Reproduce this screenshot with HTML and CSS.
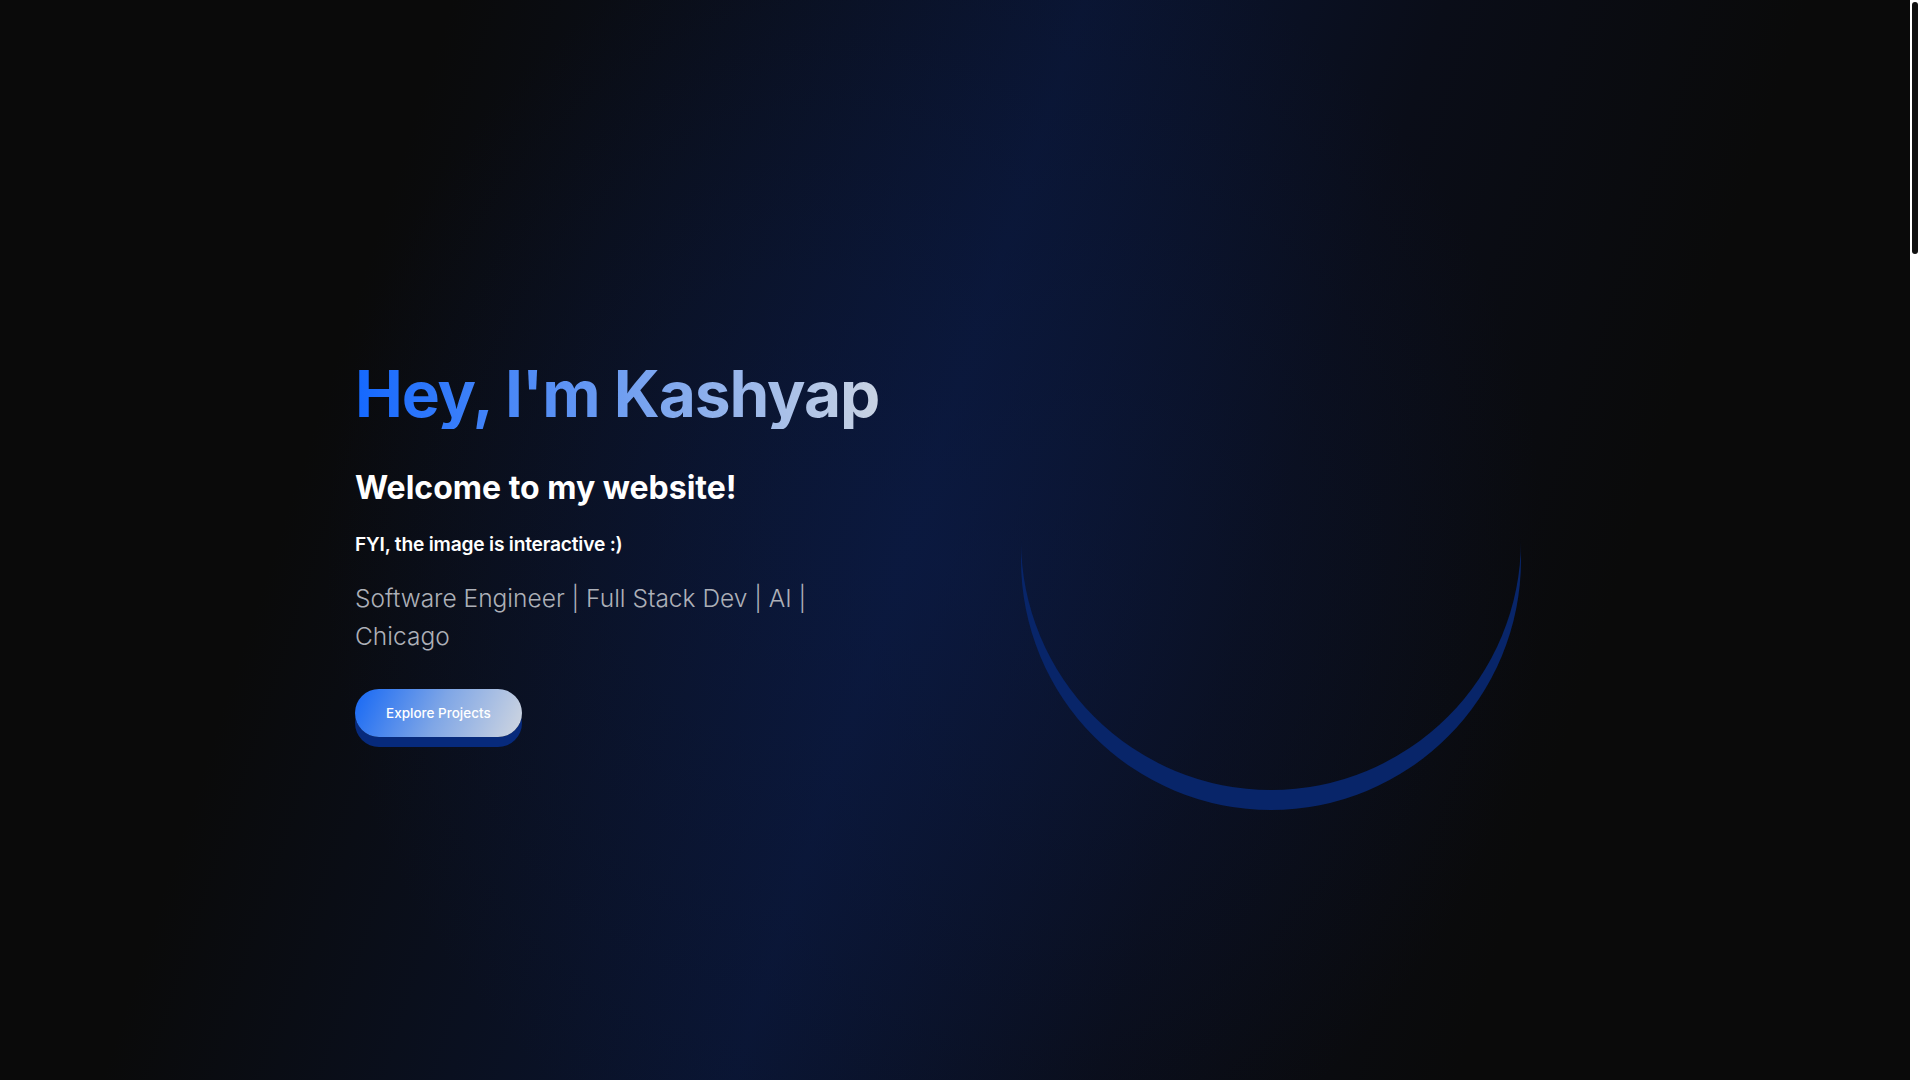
FILE: index.html
```html
<!DOCTYPE html>
<html lang="en">
<head>
  <meta charset="UTF-8" />
  <meta name="viewport" content="width=device-width, initial-scale=1.0" />
  <title>Kashyap</title>
  <link rel="stylesheet" href="styles.css">
</head>
<body>
  <main class="page">
    <section class="hero">
      <div class="hero-inner">
        <div class="hero-text">
          <h1 class="hero-title">Hey, I'm Kashyap</h1>
          <h2 class="hero-welcome">Welcome to my website!</h2>
          <p class="hero-note">FYI, the image is interactive :)</p>
          <p class="hero-roles">Software Engineer | Full Stack Dev | AI | Chicago</p>
          <a class="btn-explore" href="#projects">Explore Projects</a>
        </div>
        <div class="hero-visual">
          <!-- portrait slot, image not loaded yet -->
          <div class="portrait"></div>
        </div>
      </div>
    </section>

    <!-- sections further down the page -->
    <section class="section" id="about"></section>
    <section class="section" id="projects"></section>
    <section class="section" id="contact"></section>
  </main>

  <!-- scrollbar as rendered in the original window -->
  <div class="scrollbar" aria-hidden="true">
    <div class="scrollbar-thumb"></div>
  </div>
</body>
</html>
```

FILE: styles.css
```css
html {
  background: #0a0a0a;
}
body {
  margin: 0;
  font-family: "Inter", "Noto Sans", sans-serif;
  color: #fff;
  background: #0a0a0a;
}

.page {
  margin-right: 10px;
  background: #0a0a0a;
}

.hero {
  min-height: 100vh;
  display: flex;
  align-items: center;
  background:
    radial-gradient(ellipse 32% 62% at 49% 52%, rgba(12,30,80,0.45) 0%, rgba(12,30,80,0) 100%),
    linear-gradient(108deg, #0a0a0a 20%, #0a1532 48%, #0a0d18 64%, #0a0a0a 80%);
}
.hero-inner {
  width: 1200px;
  margin: 0 auto;
  display: grid;
  grid-template-columns: 1fr 1fr;
  gap: 64px;
  align-items: center;
}

.hero-text {
  padding-top: 16px;
}
.hero-title {
  display: inline-block;
  margin: 0 0 40px;
  font-size: 64px;
  line-height: 1.1;
  font-weight: 700;
  letter-spacing: -1.1px;
  white-space: nowrap;
  background: linear-gradient(to right, #1468ff, #c9d3e3);
  -webkit-background-clip: text;
  background-clip: text;
  color: transparent;
}
.hero-welcome {
  margin: 0 0 23px;
  font-size: 32px;
  line-height: 1.2;
  font-weight: 700;
}
.hero-note {
  margin: 0 0 21px;
  font-size: 19.2px;
  line-height: 28px;
  font-weight: 600;
  letter-spacing: -0.2px;
}
.hero-roles {
  max-width: 512px;
  margin: 0 0 34px;
  font-size: 24.5px;
  line-height: 38px;
  font-weight: 300;
  color: #adb0b8;
}

.btn-explore {
  display: inline-block;
  padding: 14px 31px;
  border-radius: 999px;
  font-size: 13.5px;
  line-height: 20px;
  font-weight: 500;
  color: #fff;
  text-decoration: none;
  background: linear-gradient(115deg, #1668f5 0%, #7fa6e6 50%, #d0d6e0 100%);
  box-shadow: 0 10px 0 #072a7c;
}

.hero-visual {
  display: flex;
  justify-content: center;
}
.portrait {
  width: 500px;
  height: 500px;
  border-radius: 50%;
  box-shadow: 0 20px 0 #082569;
}

.section {
  min-height: 1183px;
}

.scrollbar {
  position: fixed;
  top: 0;
  right: 0;
  bottom: 0;
  width: 10px;
  background: #fff;
}
.scrollbar-thumb {
  margin: 2px 2px 0;
  height: 252px;
  border-radius: 3px;
  background: #101010;
}
```
